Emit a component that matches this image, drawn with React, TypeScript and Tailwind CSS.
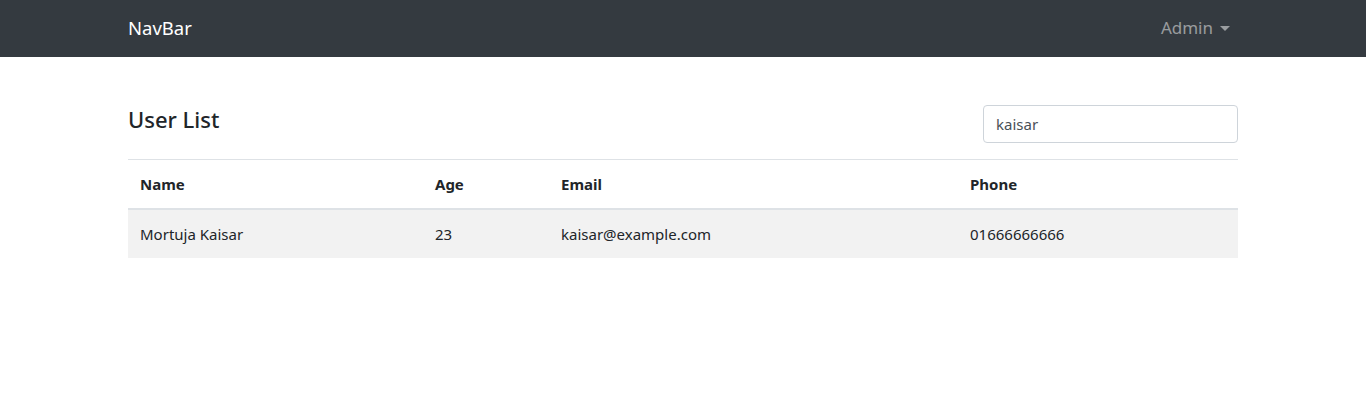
import React, { useState } from 'react';

interface User {
    name: string;
    age: number;
    email: string;
    phone: string;
}

const users: User[] = [
    { name: 'Mortuja Kaisar', age: 23, email: 'kaisar@example.com', phone: '01666666666' },
];

const font = "font-['Segoe_UI','Noto_Sans','Liberation_Sans',sans-serif]";

export default function App() {
    const [query, setQuery] = useState('kaisar');

    const filtered = users.filter(u => u.name.toLowerCase().includes(query.toLowerCase()));

    return (
        <div className={`min-h-[416px] bg-white text-[#212529] ${font}`}>
            <nav className="bg-[#343a40] h-[57px]">
                <div className="w-[1110px] mx-auto h-full flex items-center justify-between pb-[2px]">
                    <a className="text-white text-[18.5px] leading-[30px]">NavBar</a>
                    <button className="flex items-center text-white/50 text-[17px] px-2 py-2">
                        Admin
                        <span className="ml-[7px] mt-[1px] w-0 h-0 border-x-[5px] border-x-transparent border-t-[5px] border-t-white/50" />
                    </button>
                </div>
            </nav>

            <main className="w-[1110px] mx-auto pt-12">
                <div className="flex items-center justify-between mb-4">
                    <h4 className="text-[22px] font-medium leading-[29px] -mt-[9px]">User List</h4>
                    <input
                        value={query}
                        onChange={e => setQuery(e.target.value)}
                        className="w-[255px] h-[38px] px-3 border border-[#ced4da] rounded text-[15px] text-[#495057] outline-none"
                    />
                </div>

                <table className="w-full text-[15px] leading-6 border-collapse">
                    <thead>
                        <tr className="border-t border-[#dee2e6]">
                            <th className="w-[295px] text-left font-bold px-3 py-3 border-b-2 border-[#dee2e6]">Name</th>
                            <th className="w-[126px] text-left font-bold px-3 py-3 border-b-2 border-[#dee2e6]">Age</th>
                            <th className="w-[409px] text-left font-bold px-3 py-3 border-b-2 border-[#dee2e6]">Email</th>
                            <th className="text-left font-bold px-3 py-3 border-b-2 border-[#dee2e6]">Phone</th>
                        </tr>
                    </thead>
                    <tbody>
                        {filtered.map((u, i) => (
                            <tr key={u.email} className={i % 2 === 0 ? 'bg-[#f2f2f2]' : ''}>
                                <td className="px-3 py-3">{u.name}</td>
                                <td className="px-3 py-3">{u.age}</td>
                                <td className="px-3 py-3">{u.email}</td>
                                <td className="px-3 py-3">{u.phone}</td>
                            </tr>
                        ))}
                    </tbody>
                </table>
            </main>
        </div>
    );
}
